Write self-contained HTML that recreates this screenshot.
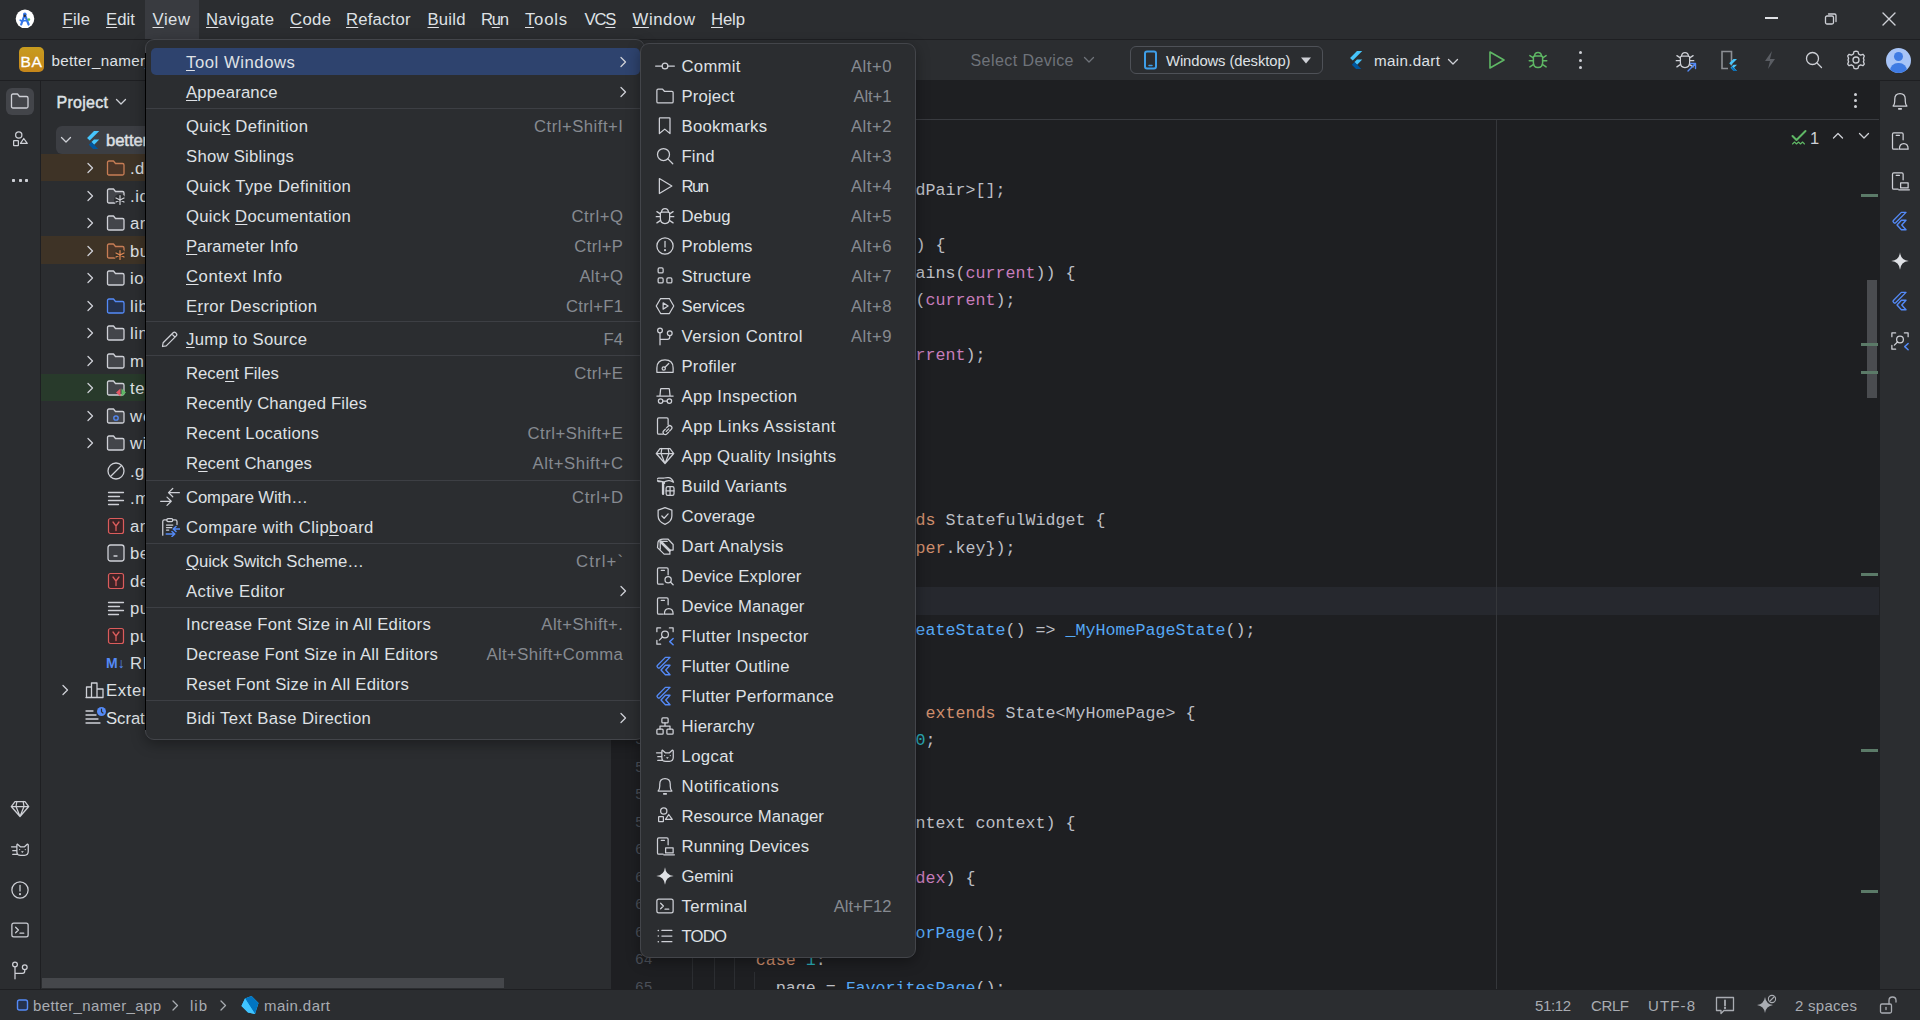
<!DOCTYPE html><html><head><meta charset="utf-8"><style>
html,body{margin:0;padding:0;width:1920px;height:1020px;overflow:hidden;background:#2b2d30;}
body{position:relative;font-family:"Liberation Sans", sans-serif;}
.t{position:absolute;white-space:nowrap;}
.r{position:absolute;}
u{text-decoration:underline;text-underline-offset:2px;text-decoration-thickness:1px;}
.code{position:absolute;font-family:"Liberation Mono", monospace;font-size:16.67px;white-space:pre;color:#bcbec4;height:27.5px;line-height:27.5px;}
</style></head><body>
<div class="r" style="left:0px;top:0px;width:1920px;height:39px;background:#2b2d30;"></div><div class="r" style="left:0px;top:39px;width:1920px;height:1px;background:#1e1f22;"></div><div class="r" style="left:0px;top:40px;width:1920px;height:40px;background:#2b2d30;"></div><div class="r" style="left:0px;top:80px;width:1920px;height:1px;background:#1e1f22;"></div><div class="r" style="left:0px;top:81px;width:40px;height:909px;background:#2b2d30;"></div><div class="r" style="left:40px;top:81px;width:1px;height:909px;background:#1e1f22;"></div><div class="r" style="left:41px;top:81px;width:570px;height:909px;background:#2b2d30;"></div><div class="r" style="left:611px;top:81px;width:1px;height:909px;background:#1e1f22;"></div><div class="r" style="left:612px;top:81px;width:1267px;height:909px;background:#1e1f22;"></div><div class="r" style="left:1879px;top:81px;width:1px;height:909px;background:#1e1f22;"></div><div class="r" style="left:1880px;top:81px;width:40px;height:909px;background:#2b2d30;"></div><div class="r" style="left:0px;top:989px;width:1920px;height:1px;background:#1e1f22;"></div><div class="r" style="left:0px;top:990px;width:1920px;height:30px;background:#2b2d30;"></div><div class="r" style="left:145px;top:0px;width:54px;height:39px;background:#393b40;"></div><div class="t" style="left:62.5px;top:8.0px;height:24px;line-height:24px;font-size:16.7px;color:#dfe1e5;font-weight:normal;letter-spacing:0.197px;"><u>F</u>ile</div><div class="t" style="left:106px;top:8.0px;height:24px;line-height:24px;font-size:16.7px;color:#dfe1e5;font-weight:normal;letter-spacing:0.074px;"><u>E</u>dit</div><div class="t" style="left:152.5px;top:8.0px;height:24px;line-height:24px;font-size:16.7px;color:#dfe1e5;font-weight:normal;letter-spacing:0.534px;"><u>V</u>iew</div><div class="t" style="left:206px;top:8.0px;height:24px;line-height:24px;font-size:16.7px;color:#dfe1e5;font-weight:normal;letter-spacing:0.298px;"><u>N</u>avigate</div><div class="t" style="left:290px;top:8.0px;height:24px;line-height:24px;font-size:16.7px;color:#dfe1e5;font-weight:normal;letter-spacing:0.358px;"><u>C</u>ode</div><div class="t" style="left:346px;top:8.0px;height:24px;line-height:24px;font-size:16.7px;color:#dfe1e5;font-weight:normal;letter-spacing:0.198px;"><u>R</u>efactor</div><div class="t" style="left:427.5px;top:8.0px;height:24px;line-height:24px;font-size:16.7px;color:#dfe1e5;font-weight:normal;letter-spacing:0.216px;"><u>B</u>uild</div><div class="t" style="left:481px;top:8.0px;height:24px;line-height:24px;font-size:16.7px;color:#dfe1e5;font-weight:normal;letter-spacing:-1.318px;">R<u>u</u>n</div><div class="t" style="left:525px;top:8.0px;height:24px;line-height:24px;font-size:16.7px;color:#dfe1e5;font-weight:normal;letter-spacing:0.753px;"><u>T</u>ools</div><div class="t" style="left:584.5px;top:8.0px;height:24px;line-height:24px;font-size:16.7px;color:#dfe1e5;font-weight:normal;letter-spacing:-1.170px;">VC<u>S</u></div><div class="t" style="left:632.5px;top:8.0px;height:24px;line-height:24px;font-size:16.7px;color:#dfe1e5;font-weight:normal;letter-spacing:0.621px;"><u>W</u>indow</div><div class="t" style="left:711px;top:8.0px;height:24px;line-height:24px;font-size:16.7px;color:#dfe1e5;font-weight:normal;letter-spacing:-0.116px;"><u>H</u>elp</div><svg class="r" style="left:12px;top:6px;" width="26" height="26" viewBox="0 0 26 26" fill="none" stroke="#ced0d6" stroke-width="1.3" stroke-linecap="round" stroke-linejoin="round"><circle cx="13" cy="12.8" r="9.3" fill="#ffffff" stroke="none"/><path d="M9.2 18.5 L12.8 8.5 L16.6 18.5" stroke="#3476e8" stroke-width="2.2" stroke-linecap="round"/><path d="M8.2 14.2 L10.5 15.5" stroke="#3476e8" stroke-width="1.6"/><circle cx="12.8" cy="8.3" r="1.8" fill="#3476e8" stroke="none"/><circle cx="12.8" cy="9.8" r="1.2" fill="#2b2d30" stroke="none"/><circle cx="16.9" cy="13.6" r="1.3" fill="#55b95e" stroke="none"/><path d="M10.6 14.8 H15" stroke="#3476e8" stroke-width="1.5"/></svg><div class="r" style="left:1765px;top:17px;width:13px;height:1.5px;background:#dfe1e5;"></div><svg class="r" style="left:1822px;top:10px;" width="18" height="18" viewBox="0 0 18 18" fill="none" stroke="#ced0d6" stroke-width="1.3" stroke-linecap="round" stroke-linejoin="round"><rect x="3.5" y="6" width="8" height="8" rx="1.5"/><path d="M6.5 4 H12.5 Q14 4 14 5.5 V11.5"/></svg><svg class="r" style="left:1880px;top:10px;" width="18" height="18" viewBox="0 0 18 18" fill="none" stroke="#ced0d6" stroke-width="1.3" stroke-linecap="round" stroke-linejoin="round"><path d="M3 3 L15 15 M15 3 L3 15" stroke-width="1.4"/></svg><div class="r" style="left:19px;top:47px;width:25px;height:25px;border-radius:5px;background:linear-gradient(#c79c1f,#c6861a);"></div><div class="t" style="left:19px;top:48.5px;height:25px;line-height:25px;font-size:15.5px;color:#ffffff;font-weight:normal;letter-spacing:0.6px;width:25px;text-align:center;-webkit-text-stroke:0.3px #fff;">BA</div><div class="t" style="left:51.5px;top:48.5px;height:24px;line-height:24px;font-size:15.2px;color:#dfe1e5;font-weight:normal;letter-spacing:0.285px;">better_namer_app</div><div class="t" style="left:970.5px;top:49.0px;height:24px;line-height:24px;font-size:16px;color:#6f737a;font-weight:normal;letter-spacing:0.431px;">Select Device</div><svg class="r" style="left:1082px;top:54px;" width="14" height="12" viewBox="0 0 14 12" fill="none" stroke="#ced0d6" stroke-width="1.3" stroke-linecap="round" stroke-linejoin="round"><path d="M2.5 3.5 L7 8 L11.5 3.5" stroke="#6f737a"/></svg><div class="r" style="left:1130px;top:46px;width:191px;height:26px;border:1px solid #4e5157;border-radius:6px;"></div><svg class="r" style="left:1143px;top:50px;" width="16" height="20" viewBox="0 0 16 20" fill="none" stroke="#ced0d6" stroke-width="1.3" stroke-linecap="round" stroke-linejoin="round"><rect x="2" y="1.5" width="11" height="17" rx="2" stroke="#3e9ee8" stroke-width="2"/><path d="M6 15.5 H9" stroke="#3e9ee8" stroke-width="1.5"/></svg><div class="t" style="left:1166px;top:49.0px;height:24px;line-height:24px;font-size:14.8px;color:#dfe1e5;font-weight:normal;letter-spacing:-0.084px;">Windows (desktop)</div><svg class="r" style="left:1299px;top:55px;" width="14" height="10" viewBox="0 0 14 10" fill="none" stroke="#ced0d6" stroke-width="1.3" stroke-linecap="round" stroke-linejoin="round"><path d="M2 2.5 H12 L7 8.5 Z" fill="#ced0d6" stroke="none"/></svg><svg class="r" style="left:1348px;top:50px;" width="15.2" height="19.0" viewBox="0 0 15.2 19.0" fill="none" stroke="#ced0d6" stroke-width="1.3" stroke-linecap="round" stroke-linejoin="round"><g transform="scale(0.95)"><path d="M9.5 1 L15 1 L5 11 L2.2 8.3 Z" fill="#47c5fb" stroke="none"/><path d="M9.5 10 L15 10 L9.6 15.5 L6.8 12.7 Z" fill="#47c5fb" stroke="none"/><path d="M6.8 12.7 L9.6 15.5 L15 21 L9.5 21 L4 15.5 Z" fill="#00569e" stroke="none"/></g></svg><div class="t" style="left:1374px;top:49.0px;height:24px;line-height:24px;font-size:15.2px;color:#dfe1e5;font-weight:normal;letter-spacing:0.330px;">main.dart</div><svg class="r" style="left:1446px;top:56px;" width="14" height="12" viewBox="0 0 14 12" fill="none" stroke="#ced0d6" stroke-width="1.3" stroke-linecap="round" stroke-linejoin="round"><path d="M2.5 3.5 L7 8 L11.5 3.5"/></svg><svg class="r" style="left:1487px;top:49px;" width="20" height="22" viewBox="0 0 20 22" fill="none" stroke="#ced0d6" stroke-width="1.3" stroke-linecap="round" stroke-linejoin="round"><path d="M3 3 L17 11 L3 19 Z" stroke="#5fb865" stroke-width="1.6"/></svg><svg class="r" style="left:1528px;top:50px;" width="20" height="20" viewBox="0 0 16 16" fill="none" stroke="#5fb865" stroke-width="1.2" stroke-linecap="round" stroke-linejoin="round"><path d="M5.2 4.8 Q5.5 2 8 2 Q10.5 2 10.8 4.8"/><path d="M4.3 6 Q4.3 4.8 5.5 4.8 H10.5 Q11.7 4.8 11.7 6 V10 Q11.7 14 8 14 Q4.3 14 4.3 10 Z"/><path d="M4.3 8.5 H1 M11.7 8.5 H15 M4.5 11.5 L1.5 13.5 M11.5 11.5 L14.5 13.5 M4.3 6.3 L1.5 4.5 M11.7 6.3 L14.5 4.5"/></svg><div class="r" style="left:1579px;top:51.0px;width:3.4px;height:3.4px;border-radius:50%;background:#ced0d6;"></div><div class="r" style="left:1579px;top:58.5px;width:3.4px;height:3.4px;border-radius:50%;background:#ced0d6;"></div><div class="r" style="left:1579px;top:66.0px;width:3.4px;height:3.4px;border-radius:50%;background:#ced0d6;"></div><svg class="r" style="left:1675px;top:50px;" width="20" height="20" viewBox="0 0 16 16" fill="none" stroke="#ced0d6" stroke-width="1" stroke-linecap="round" stroke-linejoin="round"><path d="M5.2 4.8 Q5.5 2 8 2 Q10.5 2 10.8 4.8"/><path d="M4.3 6 Q4.3 4.8 5.5 4.8 H10.5 Q11.7 4.8 11.7 6 V10 Q11.7 14 8 14 Q4.3 14 4.3 10 Z"/><path d="M4.3 8.5 H1 M11.7 8.5 H15 M4.5 11.5 L1.5 13.5 M11.5 11.5 L14.5 13.5 M4.3 6.3 L1.5 4.5 M11.7 6.3 L14.5 4.5"/></svg><svg class="r" style="left:1686px;top:61px;" width="12" height="12" viewBox="0 0 12 12" fill="none" stroke="#ced0d6" stroke-width="1.3" stroke-linecap="round" stroke-linejoin="round"><path d="M2 10 L9.5 2.5 M4.5 2.5 H9.5 V7.5" stroke="#548af7" stroke-width="1.4"/></svg><svg class="r" style="left:1719px;top:49px;" width="20" height="22" viewBox="0 0 20 22" fill="none" stroke="#ced0d6" stroke-width="1.3" stroke-linecap="round" stroke-linejoin="round"><path d="M12.5 16.5 V2.5 H3 V19.5 H9" stroke="#8c8f94" stroke-width="1.6" stroke-linecap="butt" stroke-linejoin="miter"/></svg><svg class="r" style="left:1727px;top:58px;" width="12" height="14" viewBox="0 0 12 14" fill="none" stroke="#ced0d6" stroke-width="1.3" stroke-linecap="round" stroke-linejoin="round"><path d="M6.5 1 H10 L4 7 L2.2 5.2 Z M6.5 6.8 H10 L7 9.8 L10 12.8 H6.5 L3.5 9.8 Z" fill="#47c5fb" stroke="none"/><path d="M5.3 8.5 L7 10.2 L10 13 H6.5 L3.8 10.2 Z" fill="#0a6fb8" stroke="none"/></svg><svg class="r" style="left:1762px;top:49px;" width="16" height="22" viewBox="0 0 16 22" fill="none" stroke="#ced0d6" stroke-width="1.3" stroke-linecap="round" stroke-linejoin="round"><path d="M10 2 L3 12 H8 L6 20 L13 10 H8 Z" fill="#5a5d63" stroke="none"/></svg><svg class="r" style="left:1804px;top:50px;" width="20" height="20" viewBox="0 0 20 20" fill="none" stroke="#ced0d6" stroke-width="1.3" stroke-linecap="round" stroke-linejoin="round"><circle cx="8.5" cy="8.5" r="6"/><path d="M13 13 L17.5 17.5"/></svg><svg class="r" style="left:1846px;top:49px;" width="20" height="22" viewBox="0 0 20 22" fill="none" stroke="#ced0d6" stroke-width="1.3" stroke-linecap="round" stroke-linejoin="round"><path d="M10 2.2 L12 2.6 L12.6 5 L14.6 6.1 L16.9 5.3 L18.3 6.9 L17.4 9.2 L18 11 L17.4 12.8 L18.3 15.1 L16.9 16.7 L14.6 15.9 L12.6 17 L12 19.4 L10 19.8 L8 19.4 L7.4 17 L5.4 15.9 L3.1 16.7 L1.7 15.1 L2.6 12.8 L2 11 L2.6 9.2 L1.7 6.9 L3.1 5.3 L5.4 6.1 L7.4 5 L8 2.6 Z"/><circle cx="10" cy="11" r="3"/></svg><div class="r" style="left:1886px;top:47.5px;width:25px;height:25px;border-radius:50%;background:#a7c4f7;overflow:hidden;"><div class="r" style="left:8px;top:4.5px;width:9px;height:9px;border-radius:50%;background:#3f7be3;"></div><div class="r" style="left:4px;top:15.5px;width:17px;height:12px;border-radius:8px 8px 0 0;background:#3f7be3;"></div></div><div class="r" style="left:6px;top:88px;width:28px;height:27px;background:#43454a;border-radius:6px;"></div><svg class="r" style="left:10px;top:92px;" width="20" height="18" viewBox="0 0 20 18" fill="none" stroke="#ced0d6" stroke-width="1.3" stroke-linecap="round" stroke-linejoin="round"><path d="M1.5 3.5 Q1.5 2 3 2 H7.5 L9.5 4.5 H16.5 Q18 4.5 18 6 V14.5 Q18 16 16.5 16 H3 Q1.5 16 1.5 14.5 Z" fill="none" stroke="#ced0d6"/></svg><svg class="r" style="left:10px;top:130px;" width="20" height="20" viewBox="0 0 16 16" fill="none" stroke="#ced0d6" stroke-width="1" stroke-linecap="round" stroke-linejoin="round"><circle cx="7" cy="4" r="2.5"/><rect x="2.9" y="8.4" width="3.8" height="4.1" rx="0.3"/><path d="M11 6.8 L13.8 10.7 H8.4 Z"/></svg><div class="r" style="left:12.2px;top:179.3px;width:3px;height:3px;border-radius:0.8px;background:#ced0d6;"></div><div class="r" style="left:18.5px;top:179.3px;width:3px;height:3px;border-radius:0.8px;background:#ced0d6;"></div><div class="r" style="left:24.8px;top:179.3px;width:3px;height:3px;border-radius:0.8px;background:#ced0d6;"></div><svg class="r" style="left:10px;top:799px;" width="20" height="20" viewBox="0 0 16 16" fill="none" stroke="#ced0d6" stroke-width="1" stroke-linecap="round" stroke-linejoin="round"><path d="M4 2 H12 L15 6 L8 14 L1 6 Z M1 6 H15 M5.5 2 L4.8 6 L8 14 L11.2 6 L10.5 2"/></svg><svg class="r" style="left:10px;top:840px;" width="20" height="20" viewBox="0 0 16 16" fill="none" stroke="#ced0d6" stroke-width="1" stroke-linecap="round" stroke-linejoin="round"><path d="M5.8 3.2 L8.3 5.4 H11.6 L14 3.2 Q14.6 3.2 14.6 4 V9 Q14.6 12.2 11.5 12.2 H8.6 Q5.5 12.2 5.5 9.5 V4 Q5.5 3.2 5.8 3.2 Z M1.2 5.4 H5.5 M2.2 8.5 H5.5 M2.2 11.5 H6.3"/><circle cx="7.7" cy="7.6" r="0.5" fill="#ced0d6" stroke="none"/><circle cx="12.2" cy="7.6" r="0.5" fill="#ced0d6" stroke="none"/><path d="M9.5 9.2 H10.6 L10.05 9.9 Z" fill="#ced0d6" stroke-width="0.5"/></svg><svg class="r" style="left:10px;top:880px;" width="20" height="20" viewBox="0 0 16 16" fill="none" stroke="#ced0d6" stroke-width="1" stroke-linecap="round" stroke-linejoin="round"><circle cx="8" cy="8" r="6.5"/><path d="M8 4.3 V8.8"/><circle cx="8" cy="11.3" r="0.35" fill="#ced0d6"/></svg><svg class="r" style="left:10px;top:920px;" width="20" height="20" viewBox="0 0 16 16" fill="none" stroke="#ced0d6" stroke-width="1" stroke-linecap="round" stroke-linejoin="round"><rect x="1.5" y="2.5" width="13" height="11" rx="1.5"/><path d="M4.5 5.8 L6.7 8 L4.5 10.2 M8 10.5 H11"/></svg><svg class="r" style="left:10px;top:959.5px;" width="20" height="20" viewBox="0 0 16 16" fill="none" stroke="#ced0d6" stroke-width="1" stroke-linecap="round" stroke-linejoin="round"><circle cx="4" cy="3.5" r="1.9"/><circle cx="11.8" cy="5.8" r="1.9"/><path d="M4 5.4 V15 M11.8 7.7 V8.8 Q11.8 10.6 10 10.6 H4"/></svg><div class="t" style="left:56.5px;top:91.0px;height:24px;line-height:24px;font-size:16px;color:#dfe1e5;font-weight:normal;letter-spacing:0.284px;-webkit-text-stroke:0.45px #dfe1e5;">Project</div><svg class="r" style="left:114px;top:96px;" width="14" height="12" viewBox="0 0 14 12" fill="none" stroke="#ced0d6" stroke-width="1.3" stroke-linecap="round" stroke-linejoin="round"><path d="M2.5 3.5 L7 8 L11.5 3.5"/></svg><div class="r" style="left:56px;top:126px;width:600px;height:27.5px;background:#3c3e43;border-radius:6px;"></div><svg class="r" style="left:59px;top:133px;" width="14" height="14" viewBox="0 0 14 14" fill="none" stroke="#ced0d6" stroke-width="1.3" stroke-linecap="round" stroke-linejoin="round"><path d="M2.5 4.5 L7 9 L11.5 4.5"/></svg><svg class="r" style="left:85px;top:130px;" width="15.2" height="19.0" viewBox="0 0 15.2 19.0" fill="none" stroke="#ced0d6" stroke-width="1.3" stroke-linecap="round" stroke-linejoin="round"><g transform="scale(0.95)"><path d="M9.5 1 L15 1 L5 11 L2.2 8.3 Z" fill="#47c5fb" stroke="none"/><path d="M9.5 10 L15 10 L9.6 15.5 L6.8 12.7 Z" fill="#47c5fb" stroke="none"/><path d="M6.8 12.7 L9.6 15.5 L15 21 L9.5 21 L4 15.5 Z" fill="#00569e" stroke="none"/></g></svg><div class="t" style="left:106px;top:129.0px;height:24px;line-height:24px;font-size:16.7px;color:#dfe1e5;font-weight:normal;letter-spacing:-0.099px;-webkit-text-stroke:0.45px #dfe1e5;">better_namer_app</div><div class="r" style="left:41px;top:153.75px;width:570px;height:27.5px;background:#3e3326;"></div><svg class="r" style="left:84px;top:161.0px;" width="12" height="14" viewBox="0 0 12 14" fill="none" stroke="#ced0d6" stroke-width="1.3" stroke-linecap="round" stroke-linejoin="round"><path d="M4 2.5 L8.5 7 L4 11.5"/></svg><svg class="r" style="left:106px;top:159.0px;" width="20" height="18" viewBox="0 0 20 18" fill="none" stroke="#ced0d6" stroke-width="1.3" stroke-linecap="round" stroke-linejoin="round"><path d="M1.5 3.5 Q1.5 2 3 2 H7.5 L9.5 4.5 H16.5 Q18 4.5 18 6 V14.5 Q18 16 16.5 16 H3 Q1.5 16 1.5 14.5 Z" fill="#4a3527" stroke="#c77d55"/></svg><div class="t" style="left:130px;top:157.0px;height:24px;line-height:24px;font-size:16.7px;color:#dfe1e5;font-weight:normal;letter-spacing:0.464px;">.dart_tool</div><svg class="r" style="left:84px;top:188.5px;" width="12" height="14" viewBox="0 0 12 14" fill="none" stroke="#ced0d6" stroke-width="1.3" stroke-linecap="round" stroke-linejoin="round"><path d="M4 2.5 L8.5 7 L4 11.5"/></svg><svg class="r" style="left:106px;top:186.5px;" width="20" height="18" viewBox="0 0 20 18" fill="none" stroke="#ced0d6" stroke-width="1.3" stroke-linecap="round" stroke-linejoin="round"><path d="M1.5 3.5 Q1.5 2 3 2 H7.5 L9.5 4.5 H16.5 Q18 4.5 18 6 V14.5 Q18 16 16.5 16 H3 Q1.5 16 1.5 14.5 Z" fill="#43454a" stroke="#ced0d6"/></svg><svg class="r" style="left:114px;top:193.5px;background:#2b2d30;border-radius:50%;" width="12" height="12" viewBox="0 0 12 12" fill="none" stroke="#ced0d6" stroke-width="1.3" stroke-linecap="round" stroke-linejoin="round"><path d="M6 1.5 V10.5 M2 4 L10 8 M10 4 L2 8" stroke="#ced0d6" stroke-width="1.2"/></svg><div class="t" style="left:130px;top:184.5px;height:24px;line-height:24px;font-size:16.7px;color:#dfe1e5;font-weight:normal;letter-spacing:0.543px;">.idea</div><svg class="r" style="left:84px;top:216.0px;" width="12" height="14" viewBox="0 0 12 14" fill="none" stroke="#ced0d6" stroke-width="1.3" stroke-linecap="round" stroke-linejoin="round"><path d="M4 2.5 L8.5 7 L4 11.5"/></svg><svg class="r" style="left:106px;top:214.0px;" width="20" height="18" viewBox="0 0 20 18" fill="none" stroke="#ced0d6" stroke-width="1.3" stroke-linecap="round" stroke-linejoin="round"><path d="M1.5 3.5 Q1.5 2 3 2 H7.5 L9.5 4.5 H16.5 Q18 4.5 18 6 V14.5 Q18 16 16.5 16 H3 Q1.5 16 1.5 14.5 Z" fill="#43454a" stroke="#ced0d6"/></svg><div class="t" style="left:130px;top:212.0px;height:24px;line-height:24px;font-size:16.7px;color:#dfe1e5;font-weight:normal;letter-spacing:0.557px;">android</div><div class="r" style="left:41px;top:236.25px;width:570px;height:27.5px;background:#3e3326;"></div><svg class="r" style="left:84px;top:243.5px;" width="12" height="14" viewBox="0 0 12 14" fill="none" stroke="#ced0d6" stroke-width="1.3" stroke-linecap="round" stroke-linejoin="round"><path d="M4 2.5 L8.5 7 L4 11.5"/></svg><svg class="r" style="left:106px;top:241.5px;" width="20" height="18" viewBox="0 0 20 18" fill="none" stroke="#ced0d6" stroke-width="1.3" stroke-linecap="round" stroke-linejoin="round"><path d="M1.5 3.5 Q1.5 2 3 2 H7.5 L9.5 4.5 H16.5 Q18 4.5 18 6 V14.5 Q18 16 16.5 16 H3 Q1.5 16 1.5 14.5 Z" fill="#4a3527" stroke="#c77d55"/></svg><svg class="r" style="left:114px;top:248.5px;background:#3c3226;border-radius:50%;" width="12" height="12" viewBox="0 0 12 12" fill="none" stroke="#ced0d6" stroke-width="1.3" stroke-linecap="round" stroke-linejoin="round"><path d="M6 1.5 V10.5 M2 4 L10 8 M10 4 L2 8" stroke="#e08855" stroke-width="1.2"/></svg><div class="t" style="left:130px;top:239.5px;height:24px;line-height:24px;font-size:16.7px;color:#dfe1e5;font-weight:normal;letter-spacing:0.529px;">build</div><svg class="r" style="left:84px;top:271.0px;" width="12" height="14" viewBox="0 0 12 14" fill="none" stroke="#ced0d6" stroke-width="1.3" stroke-linecap="round" stroke-linejoin="round"><path d="M4 2.5 L8.5 7 L4 11.5"/></svg><svg class="r" style="left:106px;top:269.0px;" width="20" height="18" viewBox="0 0 20 18" fill="none" stroke="#ced0d6" stroke-width="1.3" stroke-linecap="round" stroke-linejoin="round"><path d="M1.5 3.5 Q1.5 2 3 2 H7.5 L9.5 4.5 H16.5 Q18 4.5 18 6 V14.5 Q18 16 16.5 16 H3 Q1.5 16 1.5 14.5 Z" fill="#43454a" stroke="#ced0d6"/></svg><div class="t" style="left:130px;top:267.0px;height:24px;line-height:24px;font-size:16.7px;color:#dfe1e5;font-weight:normal;letter-spacing:0.640px;">ios</div><svg class="r" style="left:84px;top:298.5px;" width="12" height="14" viewBox="0 0 12 14" fill="none" stroke="#ced0d6" stroke-width="1.3" stroke-linecap="round" stroke-linejoin="round"><path d="M4 2.5 L8.5 7 L4 11.5"/></svg><svg class="r" style="left:106px;top:296.5px;" width="20" height="18" viewBox="0 0 20 18" fill="none" stroke="#ced0d6" stroke-width="1.3" stroke-linecap="round" stroke-linejoin="round"><path d="M1.5 3.5 Q1.5 2 3 2 H7.5 L9.5 4.5 H16.5 Q18 4.5 18 6 V14.5 Q18 16 16.5 16 H3 Q1.5 16 1.5 14.5 Z" fill="#25324d" stroke="#548af7"/></svg><div class="t" style="left:130px;top:294.5px;height:24px;line-height:24px;font-size:16.7px;color:#dfe1e5;font-weight:normal;letter-spacing:0.501px;">lib</div><svg class="r" style="left:84px;top:326.0px;" width="12" height="14" viewBox="0 0 12 14" fill="none" stroke="#ced0d6" stroke-width="1.3" stroke-linecap="round" stroke-linejoin="round"><path d="M4 2.5 L8.5 7 L4 11.5"/></svg><svg class="r" style="left:106px;top:324.0px;" width="20" height="18" viewBox="0 0 20 18" fill="none" stroke="#ced0d6" stroke-width="1.3" stroke-linecap="round" stroke-linejoin="round"><path d="M1.5 3.5 Q1.5 2 3 2 H7.5 L9.5 4.5 H16.5 Q18 4.5 18 6 V14.5 Q18 16 16.5 16 H3 Q1.5 16 1.5 14.5 Z" fill="#43454a" stroke="#ced0d6"/></svg><div class="t" style="left:130px;top:322.0px;height:24px;line-height:24px;font-size:16.7px;color:#dfe1e5;font-weight:normal;letter-spacing:0.515px;">linux</div><svg class="r" style="left:84px;top:353.5px;" width="12" height="14" viewBox="0 0 12 14" fill="none" stroke="#ced0d6" stroke-width="1.3" stroke-linecap="round" stroke-linejoin="round"><path d="M4 2.5 L8.5 7 L4 11.5"/></svg><svg class="r" style="left:106px;top:351.5px;" width="20" height="18" viewBox="0 0 20 18" fill="none" stroke="#ced0d6" stroke-width="1.3" stroke-linecap="round" stroke-linejoin="round"><path d="M1.5 3.5 Q1.5 2 3 2 H7.5 L9.5 4.5 H16.5 Q18 4.5 18 6 V14.5 Q18 16 16.5 16 H3 Q1.5 16 1.5 14.5 Z" fill="#43454a" stroke="#ced0d6"/></svg><div class="t" style="left:130px;top:349.5px;height:24px;line-height:24px;font-size:16.7px;color:#dfe1e5;font-weight:normal;letter-spacing:0.738px;">macos</div><div class="r" style="left:41px;top:373.75px;width:570px;height:27.5px;background:#283a2b;"></div><svg class="r" style="left:84px;top:381.0px;" width="12" height="14" viewBox="0 0 12 14" fill="none" stroke="#ced0d6" stroke-width="1.3" stroke-linecap="round" stroke-linejoin="round"><path d="M4 2.5 L8.5 7 L4 11.5"/></svg><svg class="r" style="left:106px;top:379.0px;" width="20" height="18" viewBox="0 0 20 18" fill="none" stroke="#ced0d6" stroke-width="1.3" stroke-linecap="round" stroke-linejoin="round"><path d="M1.5 3.5 Q1.5 2 3 2 H7.5 L9.5 4.5 H16.5 Q18 4.5 18 6 V14.5 Q18 16 16.5 16 H3 Q1.5 16 1.5 14.5 Z" fill="#43454a" stroke="#ced0d6"/></svg><svg class="r" style="left:115px;top:387.0px;" width="12" height="11" viewBox="0 0 12 11" fill="none" stroke="#ced0d6" stroke-width="1.3" stroke-linecap="round" stroke-linejoin="round"><path d="M5.5 1.5 L1 5.5 L5.5 9.5 Z" fill="#e55765" stroke="none"/><path d="M6.5 1.5 L11 5.5 L6.5 9.5 Z" fill="#5fb865" stroke="none"/></svg><div class="t" style="left:130px;top:377.0px;height:24px;line-height:24px;font-size:16.7px;color:#dfe1e5;font-weight:normal;letter-spacing:0.538px;">test</div><svg class="r" style="left:84px;top:408.5px;" width="12" height="14" viewBox="0 0 12 14" fill="none" stroke="#ced0d6" stroke-width="1.3" stroke-linecap="round" stroke-linejoin="round"><path d="M4 2.5 L8.5 7 L4 11.5"/></svg><svg class="r" style="left:106px;top:406.5px;" width="20" height="18" viewBox="0 0 20 18" fill="none" stroke="#ced0d6" stroke-width="1.3" stroke-linecap="round" stroke-linejoin="round"><path d="M1.5 3.5 Q1.5 2 3 2 H7.5 L9.5 4.5 H16.5 Q18 4.5 18 6 V14.5 Q18 16 16.5 16 H3 Q1.5 16 1.5 14.5 Z" fill="#43454a" stroke="#ced0d6"/></svg><svg class="r" style="left:111px;top:412.5px;" width="10" height="10" viewBox="0 0 10 10" fill="none" stroke="#ced0d6" stroke-width="1.3" stroke-linecap="round" stroke-linejoin="round"><circle cx="5" cy="5" r="2.2" stroke="#548af7" stroke-width="1.3"/></svg><div class="t" style="left:130px;top:404.5px;height:24px;line-height:24px;font-size:16.7px;color:#dfe1e5;font-weight:normal;letter-spacing:0.919px;">web</div><svg class="r" style="left:84px;top:436.0px;" width="12" height="14" viewBox="0 0 12 14" fill="none" stroke="#ced0d6" stroke-width="1.3" stroke-linecap="round" stroke-linejoin="round"><path d="M4 2.5 L8.5 7 L4 11.5"/></svg><svg class="r" style="left:106px;top:434.0px;" width="20" height="18" viewBox="0 0 20 18" fill="none" stroke="#ced0d6" stroke-width="1.3" stroke-linecap="round" stroke-linejoin="round"><path d="M1.5 3.5 Q1.5 2 3 2 H7.5 L9.5 4.5 H16.5 Q18 4.5 18 6 V14.5 Q18 16 16.5 16 H3 Q1.5 16 1.5 14.5 Z" fill="#43454a" stroke="#ced0d6"/></svg><div class="t" style="left:130px;top:432.0px;height:24px;line-height:24px;font-size:16.7px;color:#dfe1e5;font-weight:normal;letter-spacing:0.640px;">windows</div><svg class="r" style="left:106px;top:460.5px;" width="20" height="20" viewBox="0 0 20 20" fill="none" stroke="#ced0d6" stroke-width="1.3" stroke-linecap="round" stroke-linejoin="round"><circle cx="10" cy="10" r="8"/><path d="M4.5 15.5 L15.5 4.5"/></svg><div class="t" style="left:130px;top:459.5px;height:24px;line-height:24px;font-size:16.7px;color:#dfe1e5;font-weight:normal;letter-spacing:0.458px;">.gitignore</div><svg class="r" style="left:106px;top:488.0px;" width="20" height="20" viewBox="0 0 20 20" fill="none" stroke="#ced0d6" stroke-width="1.3" stroke-linecap="round" stroke-linejoin="round"><path d="M2.5 4.5 H17.5 M2.5 8.5 H13.5 M2.5 12.5 H17.5 M2.5 16.5 H12.5"/></svg><div class="t" style="left:130px;top:487.0px;height:24px;line-height:24px;font-size:16.7px;color:#dfe1e5;font-weight:normal;letter-spacing:0.557px;">.metadata</div><svg class="r" style="left:106px;top:515.5px;" width="20" height="20" viewBox="0 0 20 20" fill="none" stroke="#ced0d6" stroke-width="1.3" stroke-linecap="round" stroke-linejoin="round"><rect x="2.5" y="2.5" width="15" height="15" rx="2" stroke="#db5c5c" fill="#3b2326" stroke-width="1.2"/><path d="M7 6 L10 10 L13 6 M10 10 V14.5" stroke="#db5c5c" stroke-width="1.3"/></svg><div class="t" style="left:130px;top:514.5px;height:24px;line-height:24px;font-size:16.7px;color:#dfe1e5;font-weight:normal;letter-spacing:0.490px;">analysis_options.yaml</div><svg class="r" style="left:106px;top:543.0px;" width="20" height="20" viewBox="0 0 20 20" fill="none" stroke="#ced0d6" stroke-width="1.3" stroke-linecap="round" stroke-linejoin="round"><rect x="2" y="2" width="16" height="16" rx="2.5" fill="#3b3d42"/><path d="M8 13 H11" /></svg><div class="t" style="left:130px;top:542.0px;height:24px;line-height:24px;font-size:16.7px;color:#dfe1e5;font-weight:normal;letter-spacing:0.513px;">better_namer_app.iml</div><svg class="r" style="left:106px;top:570.5px;" width="20" height="20" viewBox="0 0 20 20" fill="none" stroke="#ced0d6" stroke-width="1.3" stroke-linecap="round" stroke-linejoin="round"><rect x="2.5" y="2.5" width="15" height="15" rx="2" stroke="#db5c5c" fill="#3b2326" stroke-width="1.2"/><path d="M7 6 L10 10 L13 6 M10 10 V14.5" stroke="#db5c5c" stroke-width="1.3"/></svg><div class="t" style="left:130px;top:569.5px;height:24px;line-height:24px;font-size:16.7px;color:#dfe1e5;font-weight:normal;letter-spacing:0.496px;">devtools_options.yaml</div><svg class="r" style="left:106px;top:598.0px;" width="20" height="20" viewBox="0 0 20 20" fill="none" stroke="#ced0d6" stroke-width="1.3" stroke-linecap="round" stroke-linejoin="round"><path d="M2.5 4.5 H17.5 M2.5 8.5 H13.5 M2.5 12.5 H17.5 M2.5 16.5 H12.5"/></svg><div class="t" style="left:130px;top:597.0px;height:24px;line-height:24px;font-size:16.7px;color:#dfe1e5;font-weight:normal;letter-spacing:0.532px;">pubspec.lock</div><svg class="r" style="left:106px;top:625.5px;" width="20" height="20" viewBox="0 0 20 20" fill="none" stroke="#ced0d6" stroke-width="1.3" stroke-linecap="round" stroke-linejoin="round"><rect x="2.5" y="2.5" width="15" height="15" rx="2" stroke="#db5c5c" fill="#3b2326" stroke-width="1.2"/><path d="M7 6 L10 10 L13 6 M10 10 V14.5" stroke="#db5c5c" stroke-width="1.3"/></svg><div class="t" style="left:130px;top:624.5px;height:24px;line-height:24px;font-size:16.7px;color:#dfe1e5;font-weight:normal;letter-spacing:0.562px;">pubspec.yaml</div><div class="t" style="left:106px;top:651.0px;height:24px;line-height:24px;font-size:14px;font-weight:bold;color:#548af7;">M&#8595;</div><div class="t" style="left:130px;top:652.0px;height:24px;line-height:24px;font-size:16.7px;color:#dfe1e5;font-weight:normal;letter-spacing:0.745px;">README.md</div><svg class="r" style="left:59px;top:683px;" width="12" height="14" viewBox="0 0 12 14" fill="none" stroke="#ced0d6" stroke-width="1.3" stroke-linecap="round" stroke-linejoin="round"><path d="M4 2.5 L8.5 7 L4 11.5"/></svg><svg class="r" style="left:84px;top:680px;" width="22" height="20" viewBox="0 0 22 20" fill="none" stroke="#ced0d6" stroke-width="1.3" stroke-linecap="round" stroke-linejoin="round"><path d="M2.5 17.5 V7 H7.5 V17.5 M7.5 17.5 V3 H13 V17.5 M13 17.5 V9 H19 V17.5 H2 Z"/></svg><div class="t" style="left:106px;top:679.0px;height:24px;line-height:24px;font-size:16.7px;color:#dfe1e5;font-weight:normal;letter-spacing:0.591px;">External Libraries</div><svg class="r" style="left:84px;top:706px;" width="24" height="22" viewBox="0 0 24 22" fill="none" stroke="#ced0d6" stroke-width="1.3" stroke-linecap="round" stroke-linejoin="round"><path d="M2 9 H12 M2 13 H14 M2 17 H16 M2 5 H9"/><circle cx="17.5" cy="5.5" r="4.5" fill="#548af7" stroke="none"/><path d="M17.5 3 V5.8 L19 7" stroke="#2b2d30" stroke-width="1.2"/></svg><div class="t" style="left:106px;top:707.0px;height:24px;line-height:24px;font-size:16.7px;color:#dfe1e5;font-weight:normal;letter-spacing:-0.049px;">Scratches and Consoles</div><div class="r" style="left:42px;top:978px;width:462px;height:10px;background:#45474b;border-radius:0;"></div><div class="r" style="left:612px;top:119px;width:1267px;height:1px;background:#393b40;"></div><div class="r" style="left:1853.5px;top:92.5px;width:3.2px;height:3.2px;border-radius:50%;background:#ced0d6;"></div><div class="r" style="left:1853.5px;top:98.5px;width:3.2px;height:3.2px;border-radius:50%;background:#ced0d6;"></div><div class="r" style="left:1853.5px;top:105.0px;width:3.2px;height:3.2px;border-radius:50%;background:#ced0d6;"></div><div class="r" style="left:612px;top:587px;width:1267px;height:28px;background:#26282e;"></div><div class="r" style="left:1496px;top:120px;width:1px;height:869px;background:#35373b;"></div><div class="r" style="left:692px;top:120px;width:1px;height:869px;background:#2c2e32;"></div><div class="r" style="left:714px;top:120px;width:1px;height:869px;background:#2c2e32;"></div><div class="r" style="left:734px;top:560px;width:1px;height:429px;background:#2c2e32;"></div><div class="r" style="left:754px;top:972px;width:1px;height:17px;background:#2c2e32;"></div><div class="r" style="left:612px;top:120px;width:1267px;height:869px;overflow:hidden;"><div class="code" style="left:83.70000000000005px;top:2.25px;"><span style="color:#bcbec4">    notifyListeners();</span></div><div class="code" style="left:0px;width:40.5px;text-align:right;top:2.25px;color:#4b5059;font-size:14.5px;">34</div><div class="code" style="left:0px;width:40.5px;text-align:right;top:29.75px;color:#4b5059;font-size:14.5px;">35</div><div class="code" style="left:83.70000000000005px;top:57.25px;"><span style="color:#bcbec4">  </span><span style="color:#cf8e6d">var</span> favorites = &lt;WordPair&gt;[];</div><div class="code" style="left:0px;width:40.5px;text-align:right;top:57.25px;color:#4b5059;font-size:14.5px;">36</div><div class="code" style="left:0px;width:40.5px;text-align:right;top:84.75px;color:#4b5059;font-size:14.5px;">37</div><div class="code" style="left:83.70000000000005px;top:112.25px;"><span style="color:#bcbec4">  </span><span style="color:#cf8e6d">void</span> <span style="color:#56a8f5">toggleFavorite</span>() {</div><div class="code" style="left:0px;width:40.5px;text-align:right;top:112.25px;color:#4b5059;font-size:14.5px;">38</div><div class="code" style="left:83.70000000000005px;top:139.75px;">    <span style="color:#cf8e6d">if</span> (favorites.contains(<span style="color:#c77dbb">current</span>)) {</div><div class="code" style="left:0px;width:40.5px;text-align:right;top:139.75px;color:#4b5059;font-size:14.5px;">39</div><div class="code" style="left:83.70000000000005px;top:167.25px;">      favorites.remove(<span style="color:#c77dbb">current</span>);</div><div class="code" style="left:0px;width:40.5px;text-align:right;top:167.25px;color:#4b5059;font-size:14.5px;">40</div><div class="code" style="left:83.70000000000005px;top:194.75px;">    } <span style="color:#cf8e6d">else</span> {</div><div class="code" style="left:0px;width:40.5px;text-align:right;top:194.75px;color:#4b5059;font-size:14.5px;">41</div><div class="code" style="left:83.70000000000005px;top:222.25px;">      favorites.add(<span style="color:#c77dbb">current</span>);</div><div class="code" style="left:0px;width:40.5px;text-align:right;top:222.25px;color:#4b5059;font-size:14.5px;">42</div><div class="code" style="left:83.70000000000005px;top:249.75px;">    }</div><div class="code" style="left:0px;width:40.5px;text-align:right;top:249.75px;color:#4b5059;font-size:14.5px;">43</div><div class="code" style="left:83.70000000000005px;top:277.25px;">    notifyListeners();</div><div class="code" style="left:0px;width:40.5px;text-align:right;top:277.25px;color:#4b5059;font-size:14.5px;">44</div><div class="code" style="left:83.70000000000005px;top:304.75px;">  }</div><div class="code" style="left:0px;width:40.5px;text-align:right;top:304.75px;color:#4b5059;font-size:14.5px;">45</div><div class="code" style="left:83.70000000000005px;top:332.25px;">}</div><div class="code" style="left:0px;width:40.5px;text-align:right;top:332.25px;color:#4b5059;font-size:14.5px;">46</div><div class="code" style="left:0px;width:40.5px;text-align:right;top:359.75px;color:#4b5059;font-size:14.5px;">47</div><div class="code" style="left:83.70000000000005px;top:387.25px;"><span style="color:#cf8e6d">class</span> MyHomePage <span style="color:#cf8e6d">extends</span> StatefulWidget {</div><div class="code" style="left:0px;width:40.5px;text-align:right;top:387.25px;color:#4b5059;font-size:14.5px;">48</div><div class="code" style="left:83.70000000000005px;top:414.75px;">  <span style="color:#cf8e6d">const</span> MyHomePage({<span style="color:#cf8e6d">super</span>.key});</div><div class="code" style="left:0px;width:40.5px;text-align:right;top:414.75px;color:#4b5059;font-size:14.5px;">49</div><div class="code" style="left:0px;width:40.5px;text-align:right;top:442.25px;color:#4b5059;font-size:14.5px;">50</div><div class="code" style="left:83.70000000000005px;top:469.75px;">  @override</div><div class="code" style="left:0px;width:40.5px;text-align:right;top:469.75px;color:#4b5059;font-size:14.5px;">51</div><div class="code" style="left:83.70000000000005px;top:497.25px;">  State&lt;MyHomePage&gt; <span style="color:#56a8f5">createState</span>() =&gt; <span style="color:#56a8f5">_MyHomePageState</span>();</div><div class="code" style="left:0px;width:40.5px;text-align:right;top:497.25px;color:#4b5059;font-size:14.5px;">52</div><div class="code" style="left:83.70000000000005px;top:524.75px;">}</div><div class="code" style="left:0px;width:40.5px;text-align:right;top:524.75px;color:#4b5059;font-size:14.5px;">53</div><div class="code" style="left:0px;width:40.5px;text-align:right;top:552.25px;color:#4b5059;font-size:14.5px;">54</div><div class="code" style="left:83.70000000000005px;top:579.75px;"><span style="color:#cf8e6d">class</span> _MyHomePageState <span style="color:#cf8e6d">extends</span> State&lt;MyHomePage&gt; {</div><div class="code" style="left:0px;width:40.5px;text-align:right;top:579.75px;color:#4b5059;font-size:14.5px;">55</div><div class="code" style="left:83.70000000000005px;top:607.25px;">  <span style="color:#cf8e6d">var</span> selectedIndex = <span style="color:#2aacb8">0</span>;</div><div class="code" style="left:0px;width:40.5px;text-align:right;top:607.25px;color:#4b5059;font-size:14.5px;">56</div><div class="code" style="left:0px;width:40.5px;text-align:right;top:634.75px;color:#4b5059;font-size:14.5px;">57</div><div class="code" style="left:83.70000000000005px;top:662.25px;">  @override</div><div class="code" style="left:0px;width:40.5px;text-align:right;top:662.25px;color:#4b5059;font-size:14.5px;">58</div><div class="code" style="left:83.70000000000005px;top:689.75px;">  Widget <span style="color:#56a8f5">build</span>(BuildContext context) {</div><div class="code" style="left:0px;width:40.5px;text-align:right;top:689.75px;color:#4b5059;font-size:14.5px;">59</div><div class="code" style="left:83.70000000000005px;top:717.25px;">    Widget page;</div><div class="code" style="left:0px;width:40.5px;text-align:right;top:717.25px;color:#4b5059;font-size:14.5px;">60</div><div class="code" style="left:83.70000000000005px;top:744.75px;">    <span style="color:#cf8e6d">switch</span> (<span style="color:#c77dbb">selectedIndex</span>) {</div><div class="code" style="left:0px;width:40.5px;text-align:right;top:744.75px;color:#4b5059;font-size:14.5px;">61</div><div class="code" style="left:83.70000000000005px;top:772.25px;">      <span style="color:#cf8e6d">case</span> <span style="color:#2aacb8">0</span>:</div><div class="code" style="left:0px;width:40.5px;text-align:right;top:772.25px;color:#4b5059;font-size:14.5px;">62</div><div class="code" style="left:83.70000000000005px;top:799.75px;">        page = <span style="color:#56a8f5">GeneratorPage</span>();</div><div class="code" style="left:0px;width:40.5px;text-align:right;top:799.75px;color:#4b5059;font-size:14.5px;">63</div><div class="code" style="left:83.70000000000005px;top:827.25px;">      <span style="color:#cf8e6d">case</span> <span style="color:#2aacb8">1</span>:</div><div class="code" style="left:0px;width:40.5px;text-align:right;top:827.25px;color:#4b5059;font-size:14.5px;">64</div><div class="code" style="left:83.70000000000005px;top:854.75px;">        page = <span style="color:#56a8f5">FavoritesPage</span>();</div><div class="code" style="left:0px;width:40.5px;text-align:right;top:854.75px;color:#4b5059;font-size:14.5px;">65</div></div><div class="r" style="left:612px;top:989px;width:1267px;height:1px;background:#1e1f22;"></div><svg class="r" style="left:1790px;top:127px;" width="20" height="20" viewBox="0 0 20 20" fill="none" stroke="#ced0d6" stroke-width="1.3" stroke-linecap="round" stroke-linejoin="round"><path d="M2.5 9 L6.5 13 L15.5 4" stroke="#5fb865" stroke-width="2"/><path d="M2.5 17 L4.5 15 L6.5 17 L8.5 15 L10.5 17 L12.5 15 L14.5 17" stroke="#5fb865" stroke-width="1.1"/></svg><div class="t" style="left:1810px;top:126.0px;height:24px;line-height:24px;font-size:16.5px;color:#ced0d6;font-weight:normal;letter-spacing:0px;">1</div><svg class="r" style="left:1831px;top:130px;" width="14" height="12" viewBox="0 0 14 12" fill="none" stroke="#ced0d6" stroke-width="1.3" stroke-linecap="round" stroke-linejoin="round"><path d="M2.5 8 L7 3.5 L11.5 8"/></svg><svg class="r" style="left:1857px;top:130px;" width="14" height="12" viewBox="0 0 14 12" fill="none" stroke="#ced0d6" stroke-width="1.3" stroke-linecap="round" stroke-linejoin="round"><path d="M2.5 3.5 L7 8 L11.5 3.5"/></svg><div class="r" style="left:1866.5px;top:280px;width:10.5px;height:118px;background:#4a4c50;"></div><div class="r" style="left:1861px;top:194px;width:17px;height:3px;background:#5b7a68;"></div><div class="r" style="left:1861px;top:343px;width:17px;height:3px;background:#5b7a68;"></div><div class="r" style="left:1861px;top:371px;width:17px;height:3px;background:#5b7a68;"></div><div class="r" style="left:1861px;top:573px;width:17px;height:3px;background:#5b7a68;"></div><div class="r" style="left:1861px;top:749px;width:17px;height:3px;background:#5b7a68;"></div><div class="r" style="left:1861px;top:890px;width:17px;height:3px;background:#5b7a68;"></div><svg class="r" style="left:1890px;top:91px;" width="20" height="20" viewBox="0 0 16 16" fill="none" stroke="#ced0d6" stroke-width="1" stroke-linecap="round" stroke-linejoin="round"><path d="M2.5 12 Q3.8 10.8 3.8 8 V6.5 Q3.8 2 8 2 Q12.2 2 12.2 6.5 V8 Q12.2 10.8 13.5 12 Z"/><path d="M7 14.3 H9" stroke-width="1.3"/></svg><svg class="r" style="left:1890px;top:131px;" width="20" height="20" viewBox="0 0 16 16" fill="none" stroke="#ced0d6" stroke-width="1" stroke-linecap="round" stroke-linejoin="round"><path d="M10.5 7 V2.5 Q10.5 1.5 9.5 1.5 H3 Q2 1.5 2 2.5 V13.5 Q2 14.5 3 14.5 H6.5"/><path d="M5 3.5 H7.5"/><path d="M7.5 14.5 Q7.5 10 11 10 Q14.5 10 14.5 14.5 Z"/></svg><svg class="r" style="left:1890px;top:171px;" width="20" height="20" viewBox="0 0 16 16" fill="none" stroke="#ced0d6" stroke-width="1" stroke-linecap="round" stroke-linejoin="round"><path d="M10.5 7 V2.5 Q10.5 1.5 9.5 1.5 H3 Q2 1.5 2 2.5 V13.5 Q2 14.5 3 14.5 H6.5"/><path d="M5 3.5 H7.5"/><rect x="8.5" y="9.5" width="6" height="4"/><path d="M7 15 H15.5"/></svg><svg class="r" style="left:1891px;top:211px;" width="20" height="20" viewBox="0 0 16 16" fill="none" stroke="#548af7" stroke-width="1.1" stroke-linecap="round" stroke-linejoin="round"><path d="M8.3 1.1 H12 L3.7 9.4 Q3 10 2.4 9.4 L1.9 8.9 Q1.3 8.3 1.9 7.6 Z M8.3 7.4 H12 L8.6 11.2 L12 15 H8.3 L4.8 11.2 Z" /></svg><svg class="r" style="left:1890px;top:251px;" width="20" height="20" viewBox="0 0 16 16"><path d="M8 1 Q8.6 7.4 15 8 Q8.6 8.6 8 15 Q7.4 8.6 1 8 Q7.4 7.4 8 1 Z" fill="#dfe1e5"/></svg><svg class="r" style="left:1891px;top:291px;" width="20" height="20" viewBox="0 0 16 16" fill="none" stroke="#548af7" stroke-width="1.1" stroke-linecap="round" stroke-linejoin="round"><path d="M8.3 1.1 H12 L3.7 9.4 Q3 10 2.4 9.4 L1.9 8.9 Q1.3 8.3 1.9 7.6 Z M8.3 7.4 H12 L8.6 11.2 L12 15 H8.3 L4.8 11.2 Z" /></svg><svg class="r" style="left:1890px;top:331px;" width="20" height="20" viewBox="0 0 16 16" fill="none" stroke="#ced0d6" stroke-width="1" stroke-linecap="round" stroke-linejoin="round"><path d="M1.5 4.5 V1.5 H4.5 M11.5 1.5 H14.5 V4.5 M1.5 11.5 V14.5 H4.5"/><circle cx="8" cy="6.8" r="2.7"/><path d="M6 8.8 L3.5 11.3"/><path d="M14.5 10 L11.8 12.5 L14.5 15" stroke="#548af7" stroke-width="1.2"/></svg><svg class="r" style="left:15px;top:997px;" width="14" height="16" viewBox="0 0 14 16" fill="none" stroke="#ced0d6" stroke-width="1.3" stroke-linecap="round" stroke-linejoin="round"><rect x="2.5" y="3" width="10" height="10" rx="2" stroke="#548af7" fill="#25324d" stroke-width="1.4"/></svg><div class="t" style="left:33px;top:994.0px;height:24px;line-height:24px;font-size:15px;color:#a9acb2;font-weight:normal;letter-spacing:0.361px;">better_namer_app</div><svg class="r" style="left:170px;top:998px;" width="10" height="14" viewBox="0 0 10 14" fill="none" stroke="#ced0d6" stroke-width="1.3" stroke-linecap="round" stroke-linejoin="round"><path d="M3 3 L7.5 7.5 L3 12" stroke="#a9acb2"/></svg><div class="t" style="left:190px;top:994.0px;height:24px;line-height:24px;font-size:15px;color:#a9acb2;font-weight:normal;letter-spacing:0.996px;">lib</div><svg class="r" style="left:218px;top:998px;" width="10" height="14" viewBox="0 0 10 14" fill="none" stroke="#ced0d6" stroke-width="1.3" stroke-linecap="round" stroke-linejoin="round"><path d="M3 3 L7.5 7.5 L3 12" stroke="#a9acb2"/></svg><svg class="r" style="left:240px;top:995px;" width="20" height="20" viewBox="0 0 20 20" fill="none" stroke="#ced0d6" stroke-width="1.3" stroke-linecap="round" stroke-linejoin="round"><path d="M5 3.5 L11.5 1 L18.5 8 L15 19 L8 17.5 L1.5 11 Z" fill="#40c4ff" stroke="none"/><path d="M5 3.5 L11.5 1 L18.5 8 L15 19 Z" fill="#0175c2" stroke="none"/><path d="M5 3.5 L15 19 L8 17.5 L1.5 11 Z" fill="#40c4ff" stroke="none"/></svg><div class="t" style="left:264px;top:994.0px;height:24px;line-height:24px;font-size:15px;color:#a9acb2;font-weight:normal;letter-spacing:0.434px;">main.dart</div><div class="t" style="left:1535px;top:994.0px;height:24px;line-height:24px;font-size:15px;color:#a9acb2;font-weight:normal;letter-spacing:-0.384px;">51:12</div><div class="t" style="left:1591px;top:994.0px;height:24px;line-height:24px;font-size:15px;color:#a9acb2;font-weight:normal;letter-spacing:-0.390px;">CRLF</div><div class="t" style="left:1648px;top:994.0px;height:24px;line-height:24px;font-size:15px;color:#a9acb2;font-weight:normal;letter-spacing:1.126px;">UTF-8</div><svg class="r" style="left:1714px;top:995px;" width="22" height="20" viewBox="0 0 22 20" fill="none" stroke="#ced0d6" stroke-width="1.3" stroke-linecap="round" stroke-linejoin="round"><path d="M2.5 2.5 H19.5 V15.5 H10 L7 18.5 V15.5 H2.5 Z" stroke="#a9acb2"/><path d="M11 5.5 V10.5" stroke="#a9acb2" stroke-width="1.8"/><circle cx="11" cy="13" r="0.5" stroke="#a9acb2" stroke-width="1.3"/></svg><svg class="r" style="left:1755px;top:993px;" width="24" height="22" viewBox="0 0 24 22" fill="none" stroke="#ced0d6" stroke-width="1.3" stroke-linecap="round" stroke-linejoin="round"><path d="M10 4 Q11 11 18 12 Q11 13 10 20 Q9 13 2 12 Q9 11 10 4 Z" fill="#a9acb2" stroke="none"/><circle cx="17" cy="6" r="3.6" fill="#2b2d30" stroke="#a9acb2" stroke-width="1.1"/><path d="M15 8 L19 4" stroke="#a9acb2" stroke-width="1.1"/></svg><div class="t" style="left:1795px;top:994.0px;height:24px;line-height:24px;font-size:15px;color:#a9acb2;font-weight:normal;letter-spacing:0.280px;">2 spaces</div><svg class="r" style="left:1878px;top:994px;" width="24" height="22" viewBox="0 0 24 22" fill="none" stroke="#ced0d6" stroke-width="1.3" stroke-linecap="round" stroke-linejoin="round"><rect x="2.5" y="10" width="11" height="9" rx="1.5" stroke="#a9acb2"/><path d="M11 10 V6.5 Q11 3 14.5 3 Q18 3 18 6.5 V8" stroke="#a9acb2"/><path d="M8 13.5 V15.5" stroke="#a9acb2"/></svg><div class="r" style="left:145px;top:39px;width:498px;height:699px;background:#2b2d30;border:1px solid #43454a;border-radius:9px;box-shadow:0 4px 14px rgba(0,0,0,0.35);"></div><div class="r" style="left:145px;top:53px;width:1.2px;height:677px;background:#000000;"></div><div class="r" style="left:151px;top:48px;width:489px;height:27px;background:#2e436e;border-radius:5px;"></div><div class="t" style="left:186px;top:51.0px;height:24px;line-height:24px;font-size:16.7px;color:#dfe1e5;font-weight:normal;letter-spacing:0.543px;"><u>T</u>ool Windows</div><svg class="r" style="left:617px;top:55px;" width="12" height="14" viewBox="0 0 12 14" fill="none" stroke="#ced0d6" stroke-width="1.3" stroke-linecap="round" stroke-linejoin="round"><path d="M4 2.5 L8.5 7 L4 11.5"/></svg><div class="t" style="left:186px;top:81.0px;height:24px;line-height:24px;font-size:16.7px;color:#dfe1e5;font-weight:normal;letter-spacing:0.181px;"><u>A</u>ppearance</div><svg class="r" style="left:617px;top:85px;" width="12" height="14" viewBox="0 0 12 14" fill="none" stroke="#ced0d6" stroke-width="1.3" stroke-linecap="round" stroke-linejoin="round"><path d="M4 2.5 L8.5 7 L4 11.5"/></svg><div class="r" style="left:146px;top:108px;width:495px;height:1px;background:#3d3f44;"></div><div class="t" style="left:186px;top:115.0px;height:24px;line-height:24px;font-size:16.7px;color:#dfe1e5;font-weight:normal;letter-spacing:0.337px;">Quic<u>k</u> Definition</div><div class="t" style="left:534.00px;top:115.0px;height:24px;line-height:24px;font-size:16.7px;color:#868a91;font-weight:normal;letter-spacing:0.497px;">Ctrl+Shift+I</div><div class="t" style="left:186px;top:145.0px;height:24px;line-height:24px;font-size:16.7px;color:#dfe1e5;font-weight:normal;letter-spacing:0.258px;">Show Siblings</div><div class="t" style="left:186px;top:175.0px;height:24px;line-height:24px;font-size:16.7px;color:#dfe1e5;font-weight:normal;letter-spacing:0.375px;">Quick Type Definition</div><div class="t" style="left:186px;top:205.0px;height:24px;line-height:24px;font-size:16.7px;color:#dfe1e5;font-weight:normal;letter-spacing:0.297px;">Quick <u>D</u>ocumentation</div><div class="t" style="left:571.50px;top:205.0px;height:24px;line-height:24px;font-size:16.7px;color:#868a91;font-weight:normal;letter-spacing:0.557px;">Ctrl+Q</div><div class="t" style="left:186px;top:235.0px;height:24px;line-height:24px;font-size:16.7px;color:#dfe1e5;font-weight:normal;letter-spacing:0.118px;"><u>P</u>arameter Info</div><div class="t" style="left:574.30px;top:235.0px;height:24px;line-height:24px;font-size:16.7px;color:#868a91;font-weight:normal;letter-spacing:0.367px;">Ctrl+P</div><div class="t" style="left:186px;top:265.0px;height:24px;line-height:24px;font-size:16.7px;color:#dfe1e5;font-weight:normal;letter-spacing:0.541px;"><u>C</u>ontext Info</div><div class="t" style="left:579.40px;top:265.0px;height:24px;line-height:24px;font-size:16.7px;color:#868a91;font-weight:normal;letter-spacing:0.342px;">Alt+Q</div><div class="t" style="left:186px;top:295.0px;height:24px;line-height:24px;font-size:16.7px;color:#dfe1e5;font-weight:normal;letter-spacing:0.357px;">E<u>r</u>ror Description</div><div class="t" style="left:566.00px;top:295.0px;height:24px;line-height:24px;font-size:16.7px;color:#868a91;font-weight:normal;letter-spacing:0.298px;">Ctrl+F1</div><div class="r" style="left:146px;top:321px;width:495px;height:1px;background:#3d3f44;"></div><div class="t" style="left:186px;top:328.0px;height:24px;line-height:24px;font-size:16.7px;color:#dfe1e5;font-weight:normal;letter-spacing:0.311px;"><u>J</u>ump to Source</div><div class="t" style="left:603.40px;top:328.0px;height:24px;line-height:24px;font-size:16.7px;color:#868a91;font-weight:normal;letter-spacing:0.111px;">F4</div><svg class="r" style="left:160px;top:329px;" width="20" height="20" viewBox="0 0 16 16" fill="none" stroke="#ced0d6" stroke-width="1" stroke-linecap="round" stroke-linejoin="round"><path d="M2 14 L2.5 11 L10.5 3 Q11.5 2 12.5 3 L13 3.5 Q14 4.5 13 5.5 L5 13.5 Z M9.5 4 L12 6.5"/></svg><div class="r" style="left:146px;top:355px;width:495px;height:1px;background:#3d3f44;"></div><div class="t" style="left:186px;top:362.0px;height:24px;line-height:24px;font-size:16.7px;color:#dfe1e5;font-weight:normal;letter-spacing:0.017px;">Rece<u>n</u>t Files</div><div class="t" style="left:574.30px;top:362.0px;height:24px;line-height:24px;font-size:16.7px;color:#868a91;font-weight:normal;letter-spacing:0.367px;">Ctrl+E</div><div class="t" style="left:186px;top:392.0px;height:24px;line-height:24px;font-size:16.7px;color:#dfe1e5;font-weight:normal;letter-spacing:0.176px;">Recently Changed Files</div><div class="t" style="left:186px;top:422.0px;height:24px;line-height:24px;font-size:16.7px;color:#dfe1e5;font-weight:normal;letter-spacing:0.264px;">Recent Locations</div><div class="t" style="left:527.50px;top:422.0px;height:24px;line-height:24px;font-size:16.7px;color:#868a91;font-weight:normal;letter-spacing:0.497px;">Ctrl+Shift+E</div><div class="t" style="left:186px;top:452.0px;height:24px;line-height:24px;font-size:16.7px;color:#dfe1e5;font-weight:normal;letter-spacing:0.123px;">R<u>e</u>cent Changes</div><div class="t" style="left:532.40px;top:452.0px;height:24px;line-height:24px;font-size:16.7px;color:#868a91;font-weight:normal;letter-spacing:0.613px;">Alt+Shift+C</div><div class="r" style="left:146px;top:480px;width:495px;height:1px;background:#3d3f44;"></div><div class="t" style="left:186px;top:486.0px;height:24px;line-height:24px;font-size:16.7px;color:#dfe1e5;font-weight:normal;letter-spacing:-0.119px;">Compare With&#8230;</div><div class="t" style="left:572.00px;top:486.0px;height:24px;line-height:24px;font-size:16.7px;color:#868a91;font-weight:normal;letter-spacing:0.643px;">Ctrl+D</div><svg class="r" style="left:160px;top:487px;" width="20" height="20" viewBox="0 0 16 16" fill="none" stroke="#ced0d6" stroke-width="1" stroke-linecap="round" stroke-linejoin="round"><path d="M15.5 4.5 H6.8 M10.2 1.2 L6.8 4.5 L10.2 7.8 M0.5 11.4 H9 M5.6 8.1 L9 11.4 L5.6 14.7"/></svg><div class="t" style="left:186px;top:516.0px;height:24px;line-height:24px;font-size:16.7px;color:#dfe1e5;font-weight:normal;letter-spacing:0.398px;">Compare with Clip<u>b</u>oard</div><svg class="r" style="left:160px;top:517px;" width="20" height="20" viewBox="0 0 16 16" fill="none" stroke="#ced0d6" stroke-width="1" stroke-linecap="round" stroke-linejoin="round"><path d="M5.5 2.2 H3.5 Q2.2 2.2 2.2 3.5 V14.5 M10.2 2.2 H12.2 Q13.6 2.2 13.6 3.5 V6"/><rect x="5.5" y="1.2" width="4.6" height="2.4" rx="0.8"/><path d="M5.2 6.4 H10.2 M5.2 8.4 H9.4 M5.2 10.4 H7"/><path d="M10.6 9.6 H15.8 M12.8 7.6 L10.6 9.6 L12.8 11.6 M5 13.6 H11.8 M9.6 11.6 L11.8 13.6 L9.6 15.6" stroke="#548af7" stroke-width="1.2"/></svg><div class="r" style="left:146px;top:543px;width:495px;height:1px;background:#3d3f44;"></div><div class="t" style="left:186px;top:550.0px;height:24px;line-height:24px;font-size:16.7px;color:#dfe1e5;font-weight:normal;letter-spacing:-0.059px;"><u>Q</u>uick Switch Scheme&#8230;</div><div class="t" style="left:576.00px;top:550.0px;height:24px;line-height:24px;font-size:16.7px;color:#868a91;font-weight:normal;letter-spacing:1.143px;">Ctrl+`</div><div class="t" style="left:186px;top:580.0px;height:24px;line-height:24px;font-size:16.7px;color:#dfe1e5;font-weight:normal;letter-spacing:0.405px;">Active Editor</div><svg class="r" style="left:617px;top:584px;" width="12" height="14" viewBox="0 0 12 14" fill="none" stroke="#ced0d6" stroke-width="1.3" stroke-linecap="round" stroke-linejoin="round"><path d="M4 2.5 L8.5 7 L4 11.5"/></svg><div class="r" style="left:146px;top:607px;width:495px;height:1px;background:#3d3f44;"></div><div class="t" style="left:186px;top:613.0px;height:24px;line-height:24px;font-size:16.7px;color:#dfe1e5;font-weight:normal;letter-spacing:0.288px;">Increase Font Size in All Editors</div><div class="t" style="left:541.30px;top:613.0px;height:24px;line-height:24px;font-size:16.7px;color:#868a91;font-weight:normal;letter-spacing:0.465px;">Alt+Shift+.</div><div class="t" style="left:186px;top:643.0px;height:24px;line-height:24px;font-size:16.7px;color:#dfe1e5;font-weight:normal;letter-spacing:0.275px;">Decrease Font Size in All Editors</div><div class="t" style="left:486.40px;top:643.0px;height:24px;line-height:24px;font-size:16.7px;color:#868a91;font-weight:normal;letter-spacing:0.409px;">Alt+Shift+Comma</div><div class="t" style="left:186px;top:673.0px;height:24px;line-height:24px;font-size:16.7px;color:#dfe1e5;font-weight:normal;letter-spacing:0.264px;">Reset Font Size in All Editors</div><div class="r" style="left:146px;top:700px;width:495px;height:1px;background:#3d3f44;"></div><div class="t" style="left:186px;top:707.0px;height:24px;line-height:24px;font-size:16.7px;color:#dfe1e5;font-weight:normal;letter-spacing:0.389px;">Bidi Text Base Direction</div><svg class="r" style="left:617px;top:711px;" width="12" height="14" viewBox="0 0 12 14" fill="none" stroke="#ced0d6" stroke-width="1.3" stroke-linecap="round" stroke-linejoin="round"><path d="M4 2.5 L8.5 7 L4 11.5"/></svg><div class="r" style="left:640px;top:43px;width:274px;height:913px;background:#2b2d30;border:1px solid #43454a;border-radius:9px;box-shadow:0 4px 14px rgba(0,0,0,0.35);"></div><svg class="r" style="left:655px;top:56px;" width="20" height="20" viewBox="0 0 16 16" fill="none" stroke="#ced0d6" stroke-width="1" stroke-linecap="round" stroke-linejoin="round"><circle cx="8" cy="8" r="2.3"/><path d="M0.5 8 H5.7 M10.3 8 H15.5"/></svg><div class="t" style="left:681.5px;top:55.0px;height:24px;line-height:24px;font-size:16.7px;color:#dfe1e5;font-weight:normal;letter-spacing:0.296px;">Commit</div><div class="t" style="left:851.00px;top:55.0px;height:24px;line-height:24px;font-size:16.7px;color:#868a91;font-weight:normal;letter-spacing:0.492px;">Alt+0</div><svg class="r" style="left:655px;top:86px;" width="20" height="20" viewBox="0 0 16 16" fill="none" stroke="#ced0d6" stroke-width="1" stroke-linecap="round" stroke-linejoin="round"><path d="M1.5 3.5 Q1.5 2.5 2.5 2.5 H6 L7.5 4.2 H13.5 Q14.5 4.2 14.5 5.2 V12.5 Q14.5 13.5 13.5 13.5 H2.5 Q1.5 13.5 1.5 12.5 Z"/></svg><div class="t" style="left:681.5px;top:85.0px;height:24px;line-height:24px;font-size:16.7px;color:#dfe1e5;font-weight:normal;letter-spacing:0.170px;">Project</div><div class="t" style="left:853.50px;top:85.0px;height:24px;line-height:24px;font-size:16.7px;color:#868a91;font-weight:normal;letter-spacing:-0.133px;">Alt+1</div><svg class="r" style="left:655px;top:116px;" width="20" height="20" viewBox="0 0 16 16" fill="none" stroke="#ced0d6" stroke-width="1" stroke-linecap="round" stroke-linejoin="round"><path d="M3.5 2 Q3.5 1.5 4 1.5 H11.5 Q12 1.5 12 2 V14 L7.8 10.5 L3.5 14 Z"/></svg><div class="t" style="left:681.5px;top:115.0px;height:24px;line-height:24px;font-size:16.7px;color:#dfe1e5;font-weight:normal;letter-spacing:0.259px;">Bookmarks</div><div class="t" style="left:851.00px;top:115.0px;height:24px;line-height:24px;font-size:16.7px;color:#868a91;font-weight:normal;letter-spacing:0.492px;">Alt+2</div><svg class="r" style="left:655px;top:146px;" width="20" height="20" viewBox="0 0 16 16" fill="none" stroke="#ced0d6" stroke-width="1" stroke-linecap="round" stroke-linejoin="round"><circle cx="6.8" cy="6.8" r="4.8"/><path d="M10.3 10.3 L14.2 14.2"/></svg><div class="t" style="left:681.5px;top:145.0px;height:24px;line-height:24px;font-size:16.7px;color:#dfe1e5;font-weight:normal;letter-spacing:0.171px;">Find</div><div class="t" style="left:851.00px;top:145.0px;height:24px;line-height:24px;font-size:16.7px;color:#868a91;font-weight:normal;letter-spacing:0.492px;">Alt+3</div><svg class="r" style="left:655px;top:176px;" width="20" height="20" viewBox="0 0 16 16" fill="none" stroke="#ced0d6" stroke-width="1" stroke-linecap="round" stroke-linejoin="round"><path d="M3.5 2 L13.5 8 L3.5 14 Z"/></svg><div class="t" style="left:681.5px;top:175.0px;height:24px;line-height:24px;font-size:16.7px;color:#dfe1e5;font-weight:normal;letter-spacing:-1.568px;">Run</div><div class="t" style="left:851.00px;top:175.0px;height:24px;line-height:24px;font-size:16.7px;color:#868a91;font-weight:normal;letter-spacing:0.492px;">Alt+4</div><svg class="r" style="left:655px;top:206px;" width="20" height="20" viewBox="0 0 16 16" fill="none" stroke="#ced0d6" stroke-width="1" stroke-linecap="round" stroke-linejoin="round"><path d="M5.2 4.8 Q5.5 2 8 2 Q10.5 2 10.8 4.8"/><path d="M4.3 6 Q4.3 4.8 5.5 4.8 H10.5 Q11.7 4.8 11.7 6 V10 Q11.7 14 8 14 Q4.3 14 4.3 10 Z"/><path d="M4.3 8.5 H1 M11.7 8.5 H15 M4.5 11.5 L1.5 13.5 M11.5 11.5 L14.5 13.5 M4.3 6.3 L1.5 4.5 M11.7 6.3 L14.5 4.5"/></svg><div class="t" style="left:681.5px;top:205.0px;height:24px;line-height:24px;font-size:16.7px;color:#dfe1e5;font-weight:normal;letter-spacing:-0.053px;">Debug</div><div class="t" style="left:851.00px;top:205.0px;height:24px;line-height:24px;font-size:16.7px;color:#868a91;font-weight:normal;letter-spacing:0.492px;">Alt+5</div><svg class="r" style="left:655px;top:236px;" width="20" height="20" viewBox="0 0 16 16" fill="none" stroke="#ced0d6" stroke-width="1" stroke-linecap="round" stroke-linejoin="round"><circle cx="8" cy="8" r="6.5"/><path d="M8 4.3 V8.8"/><circle cx="8" cy="11.3" r="0.35" fill="#ced0d6"/></svg><div class="t" style="left:681.5px;top:235.0px;height:24px;line-height:24px;font-size:16.7px;color:#dfe1e5;font-weight:normal;letter-spacing:0.066px;">Problems</div><div class="t" style="left:851.00px;top:235.0px;height:24px;line-height:24px;font-size:16.7px;color:#868a91;font-weight:normal;letter-spacing:0.492px;">Alt+6</div><svg class="r" style="left:655px;top:266px;" width="20" height="20" viewBox="0 0 16 16" fill="none" stroke="#ced0d6" stroke-width="1" stroke-linecap="round" stroke-linejoin="round"><rect x="2.5" y="1.5" width="4" height="4" rx="1"/><rect x="2.5" y="9.5" width="4" height="4" rx="1"/><rect x="9.5" y="9.5" width="4" height="4" rx="1"/></svg><div class="t" style="left:681.5px;top:265.0px;height:24px;line-height:24px;font-size:16.7px;color:#dfe1e5;font-weight:normal;letter-spacing:0.218px;">Structure</div><div class="t" style="left:851.50px;top:265.0px;height:24px;line-height:24px;font-size:16.7px;color:#868a91;font-weight:normal;letter-spacing:0.367px;">Alt+7</div><svg class="r" style="left:655px;top:296px;" width="20" height="20" viewBox="0 0 16 16" fill="none" stroke="#ced0d6" stroke-width="1" stroke-linecap="round" stroke-linejoin="round"><path d="M4.5 2 H11.5 L15 8 L11.5 14 H4.5 L1 8 Z"/><path d="M6.5 5.5 L10.5 8 L6.5 10.5 Z"/></svg><div class="t" style="left:681.5px;top:295.0px;height:24px;line-height:24px;font-size:16.7px;color:#dfe1e5;font-weight:normal;letter-spacing:-0.077px;">Services</div><div class="t" style="left:851.00px;top:295.0px;height:24px;line-height:24px;font-size:16.7px;color:#868a91;font-weight:normal;letter-spacing:0.492px;">Alt+8</div><svg class="r" style="left:655px;top:326px;" width="20" height="20" viewBox="0 0 16 16" fill="none" stroke="#ced0d6" stroke-width="1" stroke-linecap="round" stroke-linejoin="round"><circle cx="4" cy="3.5" r="1.9"/><circle cx="11.8" cy="5.8" r="1.9"/><path d="M4 5.4 V15 M11.8 7.7 V8.8 Q11.8 10.6 10 10.6 H4"/></svg><div class="t" style="left:681.5px;top:325.0px;height:24px;line-height:24px;font-size:16.7px;color:#dfe1e5;font-weight:normal;letter-spacing:0.487px;">Version Control</div><div class="t" style="left:851.00px;top:325.0px;height:24px;line-height:24px;font-size:16.7px;color:#868a91;font-weight:normal;letter-spacing:0.492px;">Alt+9</div><svg class="r" style="left:655px;top:356px;" width="20" height="20" viewBox="0 0 16 16" fill="none" stroke="#ced0d6" stroke-width="1" stroke-linecap="round" stroke-linejoin="round"><path d="M1.5 13 V9.5 Q1.5 3 8 3 Q14.5 3 14.5 9.5 V13 Z"/><circle cx="7" cy="10" r="1.3"/><path d="M8 9 L11 6"/></svg><div class="t" style="left:681.5px;top:355.0px;height:24px;line-height:24px;font-size:16.7px;color:#dfe1e5;font-weight:normal;letter-spacing:0.229px;">Profiler</div><svg class="r" style="left:655px;top:386px;" width="20" height="20" viewBox="0 0 16 16" fill="none" stroke="#ced0d6" stroke-width="1" stroke-linecap="round" stroke-linejoin="round"><path d="M4 7.5 L4.5 2.5 Q4.5 2 5 2 H11 Q11.5 2 11.5 2.5 L12 7.5 M1.5 8 H14.5"/><circle cx="4.5" cy="12" r="1.8"/><circle cx="11.5" cy="12" r="1.8"/><path d="M6.3 12 H9.7"/></svg><div class="t" style="left:681.5px;top:385.0px;height:24px;line-height:24px;font-size:16.7px;color:#dfe1e5;font-weight:normal;letter-spacing:0.386px;">App Inspection</div><svg class="r" style="left:655px;top:416px;" width="20" height="20" viewBox="0 0 16 16" fill="none" stroke="#ced0d6" stroke-width="1" stroke-linecap="round" stroke-linejoin="round"><path d="M10.5 7 V2.5 Q10.5 1.5 9.5 1.5 H3 Q2 1.5 2 2.5 V13.5 Q2 14.5 3 14.5 H6.5"/><path d="M9.2 9.5 L10.5 8.2 Q11.7 7 13 8.2 Q14.2 9.5 13 10.7 L11.7 12 M10.8 13 L9.5 14.3 Q8.3 15.5 7 14.3 Q5.8 13 7 11.8 L8.3 10.5 M9 12.3 L11 10.3"/></svg><div class="t" style="left:681.5px;top:415.0px;height:24px;line-height:24px;font-size:16.7px;color:#dfe1e5;font-weight:normal;letter-spacing:0.510px;">App Links Assistant</div><svg class="r" style="left:655px;top:446px;" width="20" height="20" viewBox="0 0 16 16" fill="none" stroke="#ced0d6" stroke-width="1" stroke-linecap="round" stroke-linejoin="round"><path d="M4 2 H12 L15 6 L8 14 L1 6 Z M1 6 H15 M5.5 2 L4.8 6 L8 14 L11.2 6 L10.5 2"/></svg><div class="t" style="left:681.5px;top:445.0px;height:24px;line-height:24px;font-size:16.7px;color:#dfe1e5;font-weight:normal;letter-spacing:0.320px;">App Quality Insights</div><svg class="r" style="left:655px;top:476px;" width="20" height="20" viewBox="0 0 16 16" fill="none" stroke="#ced0d6" stroke-width="1" stroke-linecap="round" stroke-linejoin="round"><path d="M2 2.3 Q2 1.6 2.8 1.6 H5 Q6.3 1.9 7.4 1.6 Q9.4 1.1 11 1.3 Q13.8 1.9 14.8 5 Q12.8 3.4 10.8 3.7 Q8.8 4 7.6 4.6 V5.8 M6.9 4.6 V14.2 Q6.9 14.7 6.45 14.7 Q6 14.7 6 14.2 V4.4 H2.8 Q2 4.4 2 3.6 Z"/><rect x="8.9" y="8.5" width="6.3" height="6.9" rx="1.3"/><path d="M12.05 8.5 V15.4 M8.9 11.95 H15.2"/></svg><div class="t" style="left:681.5px;top:475.0px;height:24px;line-height:24px;font-size:16.7px;color:#dfe1e5;font-weight:normal;letter-spacing:0.284px;">Build Variants</div><svg class="r" style="left:655px;top:506px;" width="20" height="20" viewBox="0 0 16 16" fill="none" stroke="#ced0d6" stroke-width="1" stroke-linecap="round" stroke-linejoin="round"><path d="M8 1.3 L13.5 3.3 V8 Q13.5 12.5 8 14.7 Q2.5 12.5 2.5 8 V3.3 Z"/><path d="M5.5 8 L7.3 9.8 L10.5 6.3"/></svg><div class="t" style="left:681.5px;top:505.0px;height:24px;line-height:24px;font-size:16.7px;color:#dfe1e5;font-weight:normal;letter-spacing:0.155px;">Coverage</div><svg class="r" style="left:655px;top:536px;" width="20" height="20" viewBox="0 0 16 16" fill="none" stroke="#ced0d6" stroke-width="1" stroke-linecap="round" stroke-linejoin="round"><path d="M2.4 5 Q3 2.4 6.5 2.4 H10.3 L14.5 6.8 V11.2 H11.9 V14.5 H7.3 L2 9.3 Z M4.2 10.6 V4.2 H9.8"/><path d="M4.6 4.6 L11.6 11.6" stroke-width="2.1"/></svg><div class="t" style="left:681.5px;top:535.0px;height:24px;line-height:24px;font-size:16.7px;color:#dfe1e5;font-weight:normal;letter-spacing:0.379px;">Dart Analysis</div><svg class="r" style="left:655px;top:566px;" width="20" height="20" viewBox="0 0 16 16" fill="none" stroke="#ced0d6" stroke-width="1" stroke-linecap="round" stroke-linejoin="round"><path d="M10.5 7 V2.5 Q10.5 1.5 9.5 1.5 H3 Q2 1.5 2 2.5 V13.5 Q2 14.5 3 14.5 H6.5"/><path d="M5 3.5 H7.5"/><circle cx="10.5" cy="11" r="2.5"/><path d="M12.3 12.8 L14.5 15"/></svg><div class="t" style="left:681.5px;top:565.0px;height:24px;line-height:24px;font-size:16.7px;color:#dfe1e5;font-weight:normal;letter-spacing:0.152px;">Device Explorer</div><svg class="r" style="left:655px;top:596px;" width="20" height="20" viewBox="0 0 16 16" fill="none" stroke="#ced0d6" stroke-width="1" stroke-linecap="round" stroke-linejoin="round"><path d="M10.5 7 V2.5 Q10.5 1.5 9.5 1.5 H3 Q2 1.5 2 2.5 V13.5 Q2 14.5 3 14.5 H6.5"/><path d="M5 3.5 H7.5"/><path d="M7.5 14.5 Q7.5 10 11 10 Q14.5 10 14.5 14.5 Z"/></svg><div class="t" style="left:681.5px;top:595.0px;height:24px;line-height:24px;font-size:16.7px;color:#dfe1e5;font-weight:normal;letter-spacing:0.108px;">Device Manager</div><svg class="r" style="left:655px;top:626px;" width="20" height="20" viewBox="0 0 16 16" fill="none" stroke="#ced0d6" stroke-width="1" stroke-linecap="round" stroke-linejoin="round"><path d="M1.5 4.5 V1.5 H4.5 M11.5 1.5 H14.5 V4.5 M1.5 11.5 V14.5 H4.5"/><circle cx="8" cy="6.8" r="2.7"/><path d="M6 8.8 L3.5 11.3"/><path d="M14.5 10 L11.8 12.5 L14.5 15" stroke="#548af7" stroke-width="1.2"/></svg><div class="t" style="left:681.5px;top:625.0px;height:24px;line-height:24px;font-size:16.7px;color:#dfe1e5;font-weight:normal;letter-spacing:0.396px;">Flutter Inspector</div><svg class="r" style="left:655px;top:656px;" width="20" height="20" viewBox="0 0 16 16" fill="none" stroke="#548af7" stroke-width="1.1" stroke-linecap="round" stroke-linejoin="round"><path d="M8.3 1.1 H12 L3.7 9.4 Q3 10 2.4 9.4 L1.9 8.9 Q1.3 8.3 1.9 7.6 Z M8.3 7.4 H12 L8.6 11.2 L12 15 H8.3 L4.8 11.2 Z" /></svg><div class="t" style="left:681.5px;top:655.0px;height:24px;line-height:24px;font-size:16.7px;color:#dfe1e5;font-weight:normal;letter-spacing:0.223px;">Flutter Outline</div><svg class="r" style="left:655px;top:686px;" width="20" height="20" viewBox="0 0 16 16" fill="none" stroke="#548af7" stroke-width="1.1" stroke-linecap="round" stroke-linejoin="round"><path d="M8.3 1.1 H12 L3.7 9.4 Q3 10 2.4 9.4 L1.9 8.9 Q1.3 8.3 1.9 7.6 Z M8.3 7.4 H12 L8.6 11.2 L12 15 H8.3 L4.8 11.2 Z" /></svg><div class="t" style="left:681.5px;top:685.0px;height:24px;line-height:24px;font-size:16.7px;color:#dfe1e5;font-weight:normal;letter-spacing:0.268px;">Flutter Performance</div><svg class="r" style="left:655px;top:716px;" width="20" height="20" viewBox="0 0 16 16" fill="none" stroke="#ced0d6" stroke-width="1" stroke-linecap="round" stroke-linejoin="round"><rect x="5.5" y="1.5" width="5" height="4" rx="0.8"/><rect x="1.5" y="10.5" width="5" height="4" rx="0.8"/><rect x="9.5" y="10.5" width="5" height="4" rx="0.8"/><path d="M8 5.5 V8 M4 10.5 V8 H12 V10.5"/></svg><div class="t" style="left:681.5px;top:715.0px;height:24px;line-height:24px;font-size:16.7px;color:#dfe1e5;font-weight:normal;letter-spacing:0.193px;">Hierarchy</div><svg class="r" style="left:655px;top:746px;" width="20" height="20" viewBox="0 0 16 16" fill="none" stroke="#ced0d6" stroke-width="1" stroke-linecap="round" stroke-linejoin="round"><path d="M5.8 3.2 L8.3 5.4 H11.6 L14 3.2 Q14.6 3.2 14.6 4 V9 Q14.6 12.2 11.5 12.2 H8.6 Q5.5 12.2 5.5 9.5 V4 Q5.5 3.2 5.8 3.2 Z M1.2 5.4 H5.5 M2.2 8.5 H5.5 M2.2 11.5 H6.3"/><circle cx="7.7" cy="7.6" r="0.5" fill="#ced0d6" stroke="none"/><circle cx="12.2" cy="7.6" r="0.5" fill="#ced0d6" stroke="none"/><path d="M9.5 9.2 H10.6 L10.05 9.9 Z" fill="#ced0d6" stroke-width="0.5"/></svg><div class="t" style="left:681.5px;top:745.0px;height:24px;line-height:24px;font-size:16.7px;color:#dfe1e5;font-weight:normal;letter-spacing:0.372px;">Logcat</div><svg class="r" style="left:655px;top:776px;" width="20" height="20" viewBox="0 0 16 16" fill="none" stroke="#ced0d6" stroke-width="1" stroke-linecap="round" stroke-linejoin="round"><path d="M2.5 12 Q3.8 10.8 3.8 8 V6.5 Q3.8 2 8 2 Q12.2 2 12.2 6.5 V8 Q12.2 10.8 13.5 12 Z"/><path d="M7 14.3 H9" stroke-width="1.3"/></svg><div class="t" style="left:681.5px;top:775.0px;height:24px;line-height:24px;font-size:16.7px;color:#dfe1e5;font-weight:normal;letter-spacing:0.536px;">Notifications</div><svg class="r" style="left:655px;top:806px;" width="20" height="20" viewBox="0 0 16 16" fill="none" stroke="#ced0d6" stroke-width="1" stroke-linecap="round" stroke-linejoin="round"><circle cx="7" cy="4" r="2.5"/><rect x="2.9" y="8.4" width="3.8" height="4.1" rx="0.3"/><path d="M11 6.8 L13.8 10.7 H8.4 Z"/></svg><div class="t" style="left:681.5px;top:805.0px;height:24px;line-height:24px;font-size:16.7px;color:#dfe1e5;font-weight:normal;letter-spacing:0.031px;">Resource Manager</div><svg class="r" style="left:655px;top:836px;" width="20" height="20" viewBox="0 0 16 16" fill="none" stroke="#ced0d6" stroke-width="1" stroke-linecap="round" stroke-linejoin="round"><path d="M10.5 7 V2.5 Q10.5 1.5 9.5 1.5 H3 Q2 1.5 2 2.5 V13.5 Q2 14.5 3 14.5 H6.5"/><path d="M5 3.5 H7.5"/><rect x="8.5" y="9.5" width="6" height="4"/><path d="M7 15 H15.5"/></svg><div class="t" style="left:681.5px;top:835.0px;height:24px;line-height:24px;font-size:16.7px;color:#dfe1e5;font-weight:normal;letter-spacing:0.097px;">Running Devices</div><svg class="r" style="left:655px;top:866px;" width="20" height="20" viewBox="0 0 16 16"><path d="M8 1 Q8.6 7.4 15 8 Q8.6 8.6 8 15 Q7.4 8.6 1 8 Q7.4 7.4 8 1 Z" fill="#dfe1e5"/></svg><div class="t" style="left:681.5px;top:865.0px;height:24px;line-height:24px;font-size:16.7px;color:#dfe1e5;font-weight:normal;letter-spacing:-0.180px;">Gemini</div><svg class="r" style="left:655px;top:896px;" width="20" height="20" viewBox="0 0 16 16" fill="none" stroke="#ced0d6" stroke-width="1" stroke-linecap="round" stroke-linejoin="round"><rect x="1.5" y="2.5" width="13" height="11" rx="1.5"/><path d="M4.5 5.8 L6.7 8 L4.5 10.2 M8 10.5 H11"/></svg><div class="t" style="left:681.5px;top:895.0px;height:24px;line-height:24px;font-size:16.7px;color:#dfe1e5;font-weight:normal;letter-spacing:0.327px;">Terminal</div><div class="t" style="left:833.80px;top:895.0px;height:24px;line-height:24px;font-size:16.7px;color:#868a91;font-weight:normal;letter-spacing:-0.053px;">Alt+F12</div><svg class="r" style="left:655px;top:926px;" width="20" height="20" viewBox="0 0 16 16" fill="none" stroke="#ced0d6" stroke-width="1" stroke-linecap="round" stroke-linejoin="round"><path d="M5.5 3.5 H13.5 M5.5 8 H13.5 M5.5 12.5 H13.5"/><path d="M2.6 3.5 H2.7 M2.6 8 H2.7 M2.6 12.5 H2.7" stroke-width="1.2"/></svg><div class="t" style="left:681.5px;top:925.0px;height:24px;line-height:24px;font-size:16.7px;color:#dfe1e5;font-weight:normal;letter-spacing:-0.813px;">TODO</div></body></html>
